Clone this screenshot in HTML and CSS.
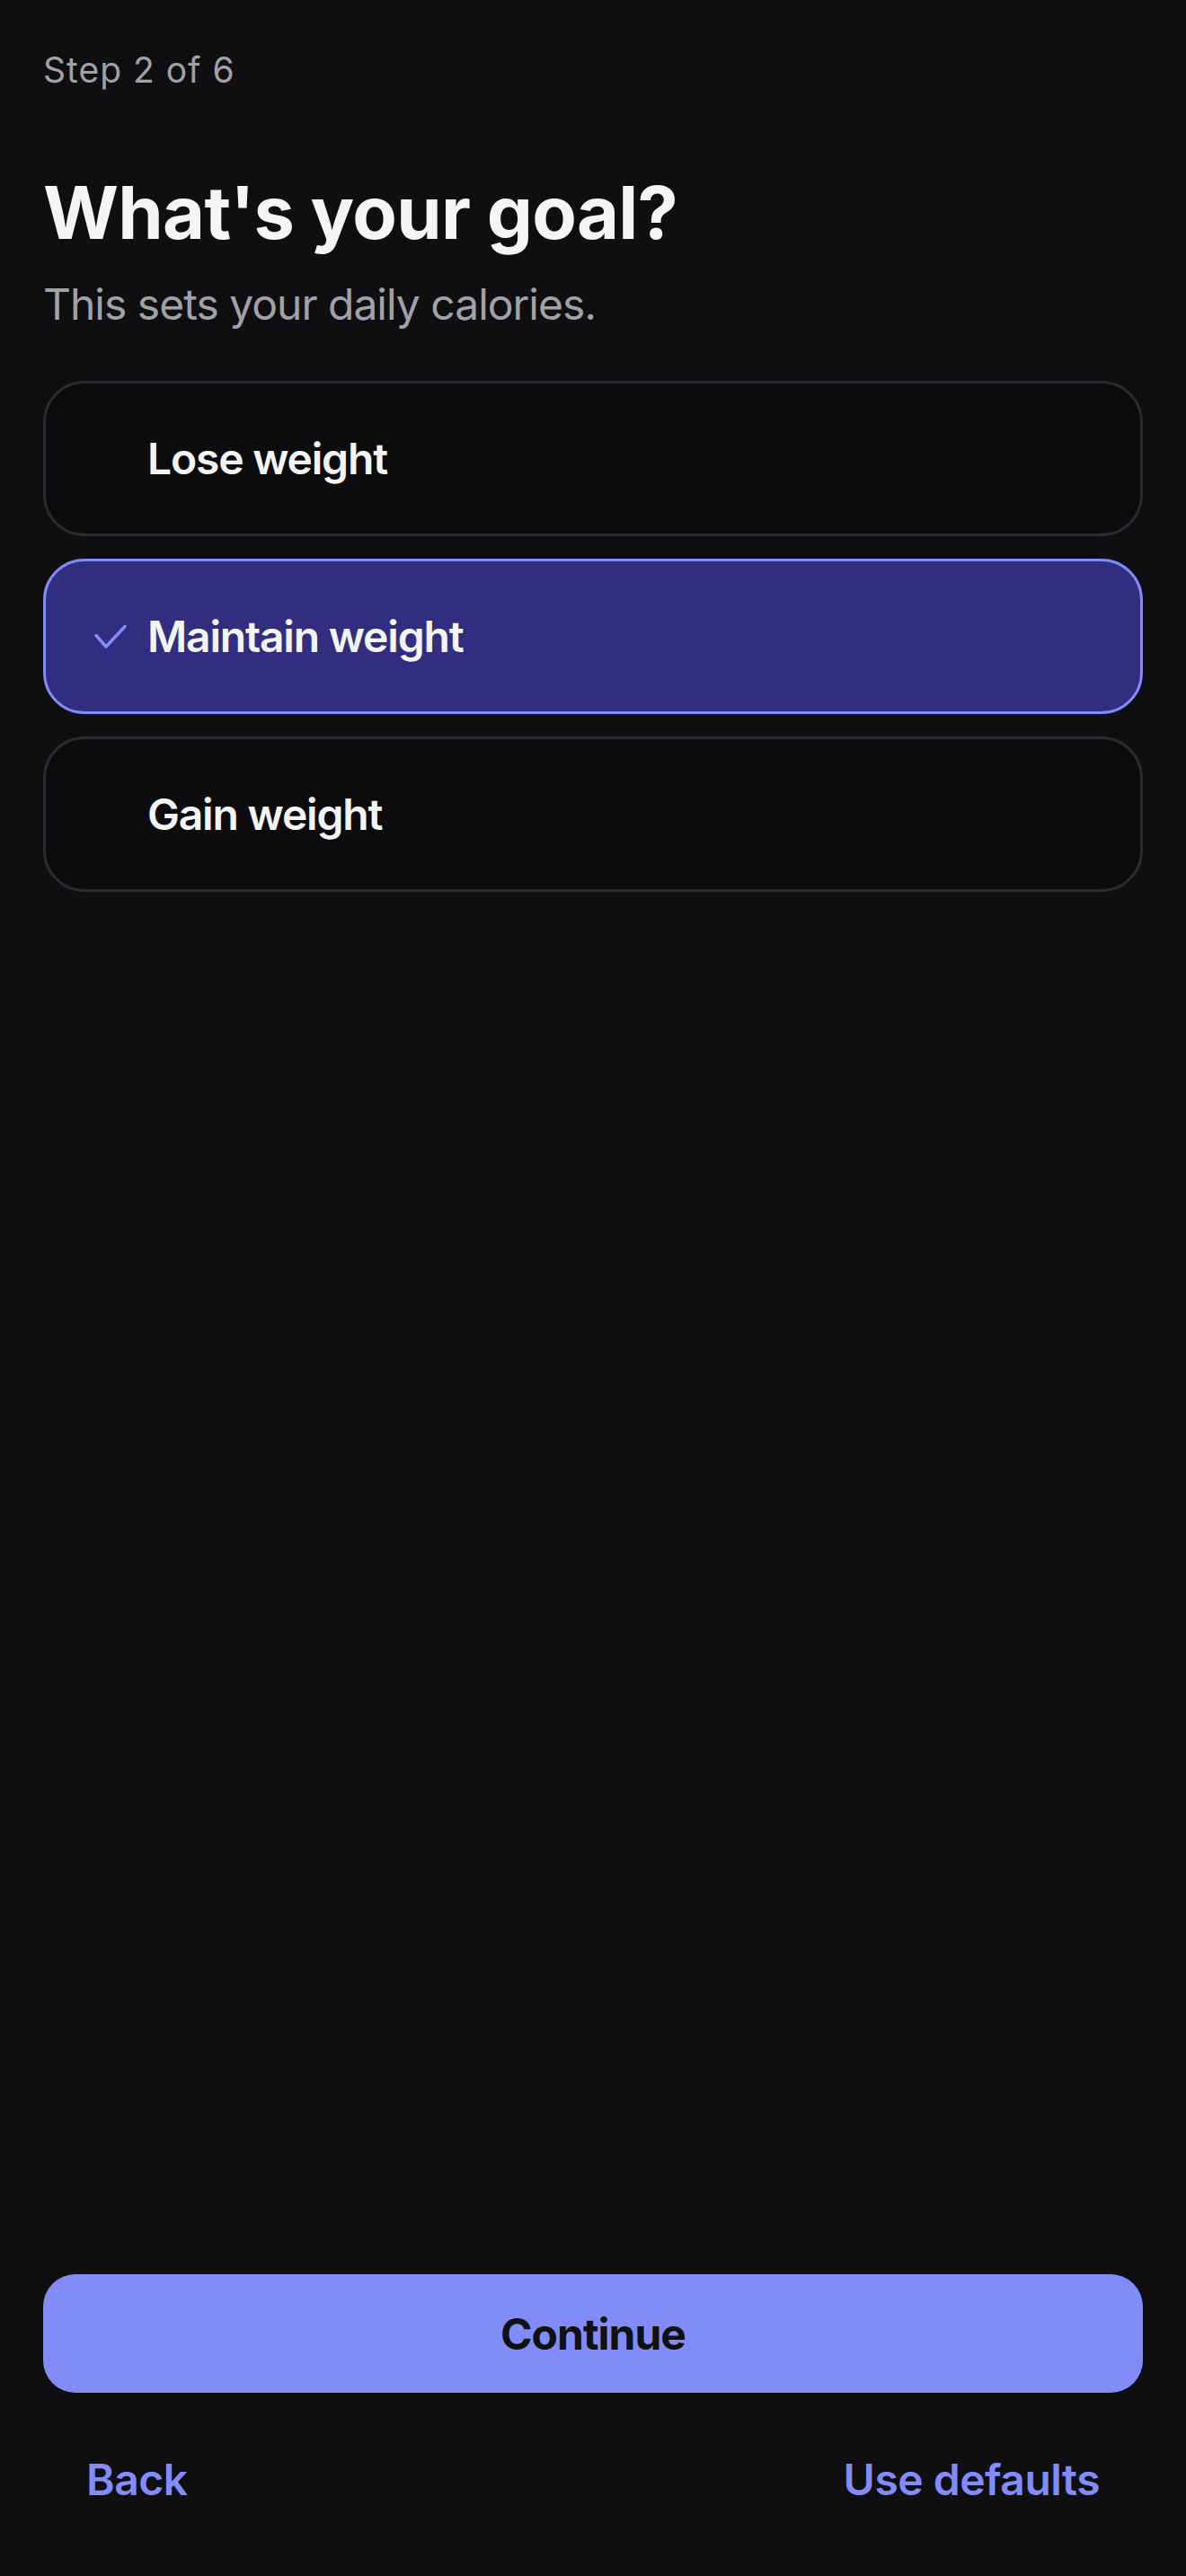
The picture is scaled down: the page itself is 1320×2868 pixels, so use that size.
FILE: index.html
```html
<!DOCTYPE html>
<html lang="en">
<head>
    <meta charset="UTF-8">
    <meta name="viewport" content="width=device-width, initial-scale=1.0">
    <title>Onboarding - Goal</title>
    <link rel="stylesheet" href="styles.css">
</head>
<body>
    <div class="screen">
        <p class="step">Step 2 of 6</p>
        <h1 class="title">What's your goal?</h1>
        <p class="subtitle">This sets your daily calories.</p>

        <div class="options">
            <button class="option" type="button">
                <span class="check"></span>
                <span class="label">Lose weight</span>
            </button>
            <button class="option selected" type="button">
                <span class="check">
                    <svg width="36" height="28" viewBox="0 0 36 28" fill="none">
                        <path d="M2 12.5 L13 25 L34 2.5" stroke="#818cf8" stroke-width="3.5" stroke-linecap="round" stroke-linejoin="round"/>
                    </svg>
                </span>
                <span class="label">Maintain weight</span>
            </button>
            <button class="option" type="button">
                <span class="check"></span>
                <span class="label">Gain weight</span>
            </button>
        </div>

        <div class="spacer"></div>

        <button class="continue" type="button">Continue</button>
        <div class="links">
            <button class="link" type="button">Back</button>
            <button class="link" type="button">Use defaults</button>
        </div>
    </div>
</body>
</html>
```
FILE: styles.css
```css
* {
    box-sizing: border-box;
}
body {
    margin: 0;
    background-color: #0f0f11;
    font-family: Inter, "Noto Sans", sans-serif;
    color: #f4f4f5;
}
.screen {
    min-height: 100vh;
    padding: 48px;
    display: flex;
    flex-direction: column;
}
.step {
    margin: 0;
    font-size: 39px;
    line-height: 60px;
    letter-spacing: 1px;
    color: #a1a1aa;
}
.title {
    margin: 81px 0 0;
    font-size: 81px;
    line-height: 96px;
    font-weight: 700;
    letter-spacing: -0.7px;
    color: #f5f5f5;
}
.subtitle {
    margin: 18px 0 0;
    font-size: 48px;
    line-height: 72px;
    letter-spacing: -1px;
    color: #a1a1aa;
}
.options {
    margin-top: 49px;
    display: flex;
    flex-direction: column;
    gap: 25px;
}
.option {
    height: 173px;
    display: flex;
    align-items: center;
    gap: 23px;
    padding: 0 54px;
    background: #0c0c0e;
    border: 3px solid #2a2a2f;
    border-radius: 46px;
    font-family: inherit;
    font-size: 48px;
    font-weight: 600;
    letter-spacing: -1.2px;
    color: #f4f4f5;
    text-align: left;
    cursor: pointer;
}
.option.selected {
    background: #312e81;
    border-color: #818cf8;
}
.check {
    width: 36px;
    height: 28px;
    flex-shrink: 0;
    display: flex;
}
.spacer {
    flex: 1;
}
.continue {
    height: 132px;
    width: 100%;
    border: none;
    border-radius: 36px;
    background-color: #818cf8;
    color: #111113;
    font-family: inherit;
    font-size: 48px;
    font-weight: 700;
    letter-spacing: -1px;
    cursor: pointer;
}
.links {
    margin-top: 36px;
    display: flex;
    justify-content: space-between;
}
.link {
    height: 120px;
    padding: 0 48px;
    border: none;
    background: none;
    color: #818cf8;
    font-family: inherit;
    font-size: 48px;
    font-weight: 600;
    letter-spacing: -0.5px;
    cursor: pointer;
}
```
